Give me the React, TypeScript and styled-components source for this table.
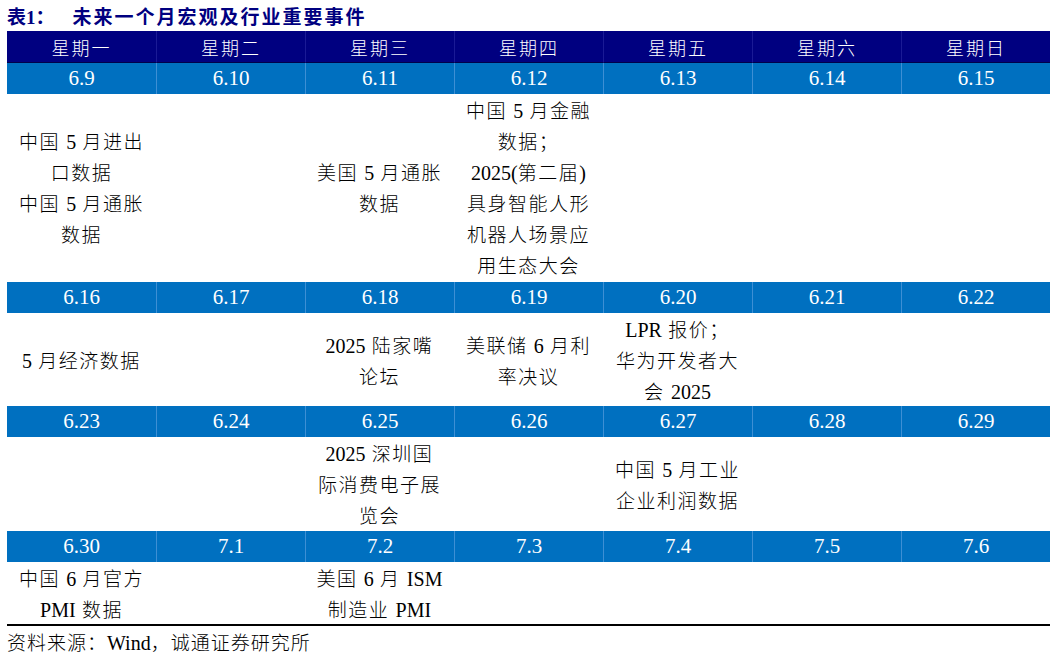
import styled, { createGlobalStyle } from "styled-components";

const GlobalStyle = createGlobalStyle`
  html, body {
    margin: 0;
    padding: 0;
    background: #ffffff;
  }
  body {
    font-family: "Liberation Serif", "Noto Sans CJK SC", serif;
    color: #000000;
  }
`;

const Page = styled.div`
  width: 1043px;
  padding: 0 6px 0 7px;
`;

const Title = styled.h1`
  margin: 0;
  height: 31px;
  display: flex;
  align-items: center;
  font-size: 19px;
  font-weight: 700;
  color: #000080;
  letter-spacing: 2px;
  span {
    margin-right: 18px;
    letter-spacing: 0;
  }
`;

const Table = styled.div`
  display: flex;
  flex-direction: column;
  border-bottom: 2px solid #000000;
`;

const Row = styled.div<{ $h: number; $bg: string }>`
  display: grid;
  grid-template-columns: repeat(7, 1fr);
  height: ${(props) => props.$h}px;
  background-color: ${(props) => props.$bg};
`;

const HeadCell = styled.div`
  display: flex;
  align-items: center;
  justify-content: center;
  color: #ffffff;
  font-size: 18px;
  font-weight: 300;
  letter-spacing: 2px;
  border-bottom: 1px solid #00004a;
  & + & {
    border-left: 1px solid #1a1a95;
  }
`;

const DateCell = styled.div`
  display: flex;
  align-items: center;
  justify-content: center;
  color: #ffffff;
  font-size: 21px;
  & + & {
    border-left: 1px solid #3d8fd4;
  }
`;

const EventCell = styled.div`
  display: flex;
  flex-direction: column;
  align-items: center;
  justify-content: center;
  padding-top: 2px;
  font-size: 19px;
  font-weight: 300;
  line-height: 31px;
  letter-spacing: 1.5px;
  white-space: nowrap;
`;

const Latin = styled.span`
  font-size: 20px;
  font-weight: 400;
  letter-spacing: 0;
`;

const Source = styled.div`
  font-size: 19px;
  font-weight: 300;
  padding-top: 2px;
  letter-spacing: 1px;
`;

const days = ["星期一", "星期二", "星期三", "星期四", "星期五", "星期六", "星期日"];

type Week = {
  dates: string[];
  height: number;
  events: Record<number, string[]>;
};

const weeks: Week[] = [
  {
    dates: ["6.9", "6.10", "6.11", "6.12", "6.13", "6.14", "6.15"],
    height: 188,
    events: {
      0: ["中国 5 月进出", "口数据", "中国 5 月通胀", "数据"],
      2: ["美国 5 月通胀", "数据"],
      3: ["中国 5 月金融", "数据；", "2025(第二届)", "具身智能人形", "机器人场景应", "用生态大会"],
    },
  },
  {
    dates: ["6.16", "6.17", "6.18", "6.19", "6.20", "6.21", "6.22"],
    height: 93,
    events: {
      0: ["5 月经济数据"],
      2: ["2025 陆家嘴", "论坛"],
      3: ["美联储 6 月利", "率决议"],
      4: ["LPR 报价；", "华为开发者大", "会 2025"],
    },
  },
  {
    dates: ["6.23", "6.24", "6.25", "6.26", "6.27", "6.28", "6.29"],
    height: 94,
    events: {
      2: ["2025 深圳国", "际消费电子展", "览会"],
      4: ["中国 5 月工业", "企业利润数据"],
    },
  },
  {
    dates: ["6.30", "7.1", "7.2", "7.3", "7.4", "7.5", "7.6"],
    height: 62,
    events: {
      0: ["中国 6 月官方", "PMI 数据"],
      2: ["美国 6 月 ISM", "制造业 PMI"],
    },
  },
];

// keep digits / latin words tight, like the original table
function renderLine(line: string) {
  return line.split(/([A-Za-z0-9().]+)/).map((part, i) =>
    /^[A-Za-z0-9().]+$/.test(part) ? <Latin key={i}>{part}</Latin> : part
  );
}

function App() {
  return (
    <>
      <GlobalStyle />
      <Page>
        <Title>
          <span>表1：</span>未来一个月宏观及行业重要事件
        </Title>
        <Table>
          <Row $h={32} $bg="#000080">
            {days.map((d) => (
              <HeadCell key={d}>{d}</HeadCell>
            ))}
          </Row>
          {weeks.map((week) => (
            <div key={week.dates[0]}>
              <Row $h={31} $bg="#0070c0">
                {week.dates.map((d) => (
                  <DateCell key={d}>{d}</DateCell>
                ))}
              </Row>
              <Row $h={week.height} $bg="#ffffff">
                {week.dates.map((d, i) => (
                  <EventCell key={d}>
                    {(week.events[i] || []).map((line) => (
                      <div key={line}>{renderLine(line)}</div>
                    ))}
                  </EventCell>
                ))}
              </Row>
            </div>
          ))}
        </Table>
        <Source>
          资料来源：<Latin>Wind</Latin>，诚通证券研究所
        </Source>
      </Page>
    </>
  );
}

export default App;
